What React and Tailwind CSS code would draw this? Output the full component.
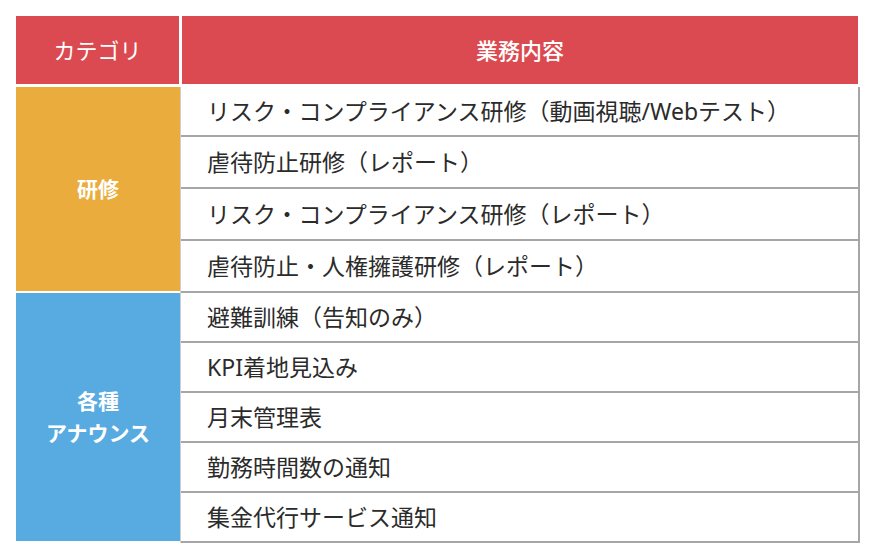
const groups = [
  {
    label: ["研修"],
    color: "bg-[#e9ac3d]",
    items: [
      "リスク・コンプライアンス研修（動画視聴/Webテスト）",
      "虐待防止研修（レポート）",
      "リスク・コンプライアンス研修（レポート）",
      "虐待防止・人権擁護研修（レポート）",
    ],
    heights: ["h-[50px]", "h-[52px]", "h-[52px]", "h-[52px]"],
  },
  {
    label: ["各種", "アナウンス"],
    color: "bg-[#58abe0]",
    items: [
      "避難訓練（告知のみ）",
      "KPI着地見込み",
      "月末管理表",
      "勤務時間数の通知",
      "集金代行サービス通知",
    ],
    heights: ["h-[50px]", "h-[50px]", "h-[50px]", "h-[50px]", "h-[50px]"],
  },
];

export default function App() {
  return (
    <div
      className="w-[872px] h-[555px] bg-white pl-4 pt-4"
      style={{ fontFamily: '"Noto Sans", "Noto Sans CJK JP", sans-serif' }}
    >
      <div className="w-[844px]">
        {/* header */}
        <div className="flex h-[68px] gap-[3px] text-white text-[22px]">
          <div className="w-[163px] bg-[#db4a50] flex items-center justify-center">
            カテゴリ
          </div>
          <div className="w-[676px] bg-[#db4a50] flex items-center justify-center font-medium">
            業務内容
          </div>
        </div>

        {/* body */}
        <div className="mt-[3px]">
          {groups.map((g) => (
            <div key={g.label.join("")} className="flex">
              <div
                className={`w-[164px] mb-[2px] ${g.color} flex flex-col items-center justify-center text-white text-[21px] font-bold leading-[32px]`}
              >
                {g.label.map((l) => (
                  <span key={l}>{l}</span>
                ))}
              </div>
              <div className="flex-1 border-l border-r-2 border-l-[#cfcfcf] border-r-[#a6a6a6]">
                {g.items.map((item, i) => (
                  <div
                    key={item}
                    className={`${g.heights[i]} border-b-2 border-[#a6a6a6] flex items-center pl-[26px] text-[23px] text-[#2b2b2b]`}
                  >
                    {item}
                  </div>
                ))}
              </div>
            </div>
          ))}
        </div>
      </div>
    </div>
  );
}
